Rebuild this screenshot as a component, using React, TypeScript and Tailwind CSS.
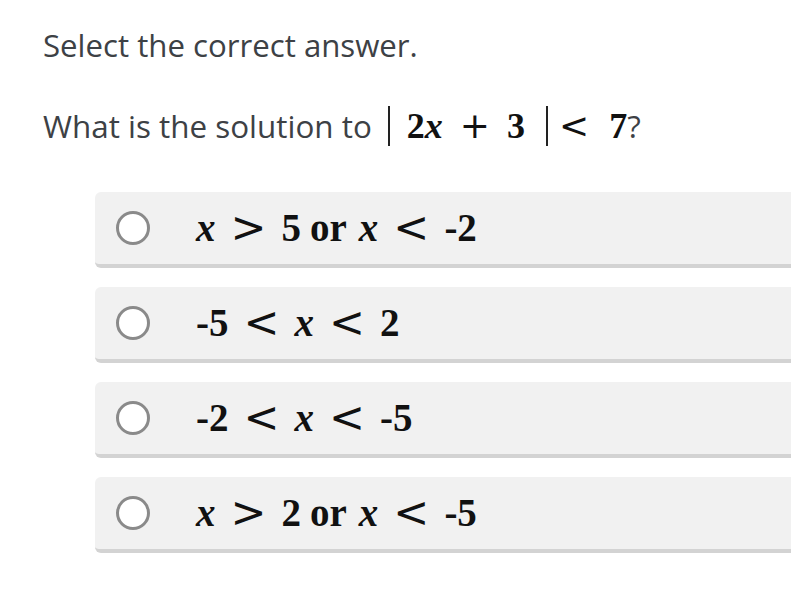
import React from "react";

const mathFont = { fontFamily: '"Liberation Serif", "Times New Roman", serif' };
const opFont = { fontFamily: '"DejaVu Sans", sans-serif' };

function Rel({ children, className = "mx-[10px]" }: { children: React.ReactNode; className?: string }) {
  return (
    <span className={`${className} font-normal`} style={opFont}>
      {children}
    </span>
  );
}

function X() {
  return <span className="italic font-bold">x</span>;
}

function Num({ children }: { children: React.ReactNode }) {
  return <span className="font-bold">{children}</span>;
}

function Or() {
  return <span className="ml-[9px] mr-[12px] font-bold">or</span>;
}

const rel = "relative top-[1px] mx-[15px] text-[43px]";

const OPTIONS: React.ReactNode[] = [
  <>
    <X />
    <Rel className={rel}>&gt;</Rel>
    <Num>5</Num>
    <Or />
    <X />
    <Rel className={rel}>&lt;</Rel>
    <Num>-2</Num>
  </>,
  <>
    <Num>-5</Num>
    <Rel className={rel}>&lt;</Rel>
    <X />
    <Rel className={rel}>&lt;</Rel>
    <Num>2</Num>
  </>,
  <>
    <Num>-2</Num>
    <Rel className={rel}>&lt;</Rel>
    <X />
    <Rel className={rel}>&lt;</Rel>
    <Num>-5</Num>
  </>,
  <>
    <X />
    <Rel className={rel}>&gt;</Rel>
    <Num>2</Num>
    <Or />
    <X />
    <Rel className={rel}>&lt;</Rel>
    <Num>-5</Num>
  </>,
];

export default function App() {
  return (
    <div
      className="min-h-screen w-[791px] overflow-hidden bg-white text-[#3d4145]"
      style={{ fontFamily: '"Open Sans", "Noto Sans", sans-serif' }}
    >
      <div className="pl-[43px] pt-[22px]">
        <h1 className="text-[31.2px] leading-[46px]">Select the correct answer.</h1>

        <div className="mt-[35px] flex items-center text-[31.4px] leading-[46px]">
          <span>What is the solution to</span>
          <span className="ml-[16px] flex items-center text-[#111] text-[36px]" style={mathFont}>
            <span className="h-[40px] w-[2px] bg-[#222]" />
            <span className="ml-[17px] font-bold">2</span>
            <X />
            <Rel className="mx-[17px]">+</Rel>
            <Num>3</Num>
            <span className="ml-[21px] h-[40px] w-[2px] bg-[#222]" />
            <Rel className="ml-[11px] mr-[20px]">&lt;</Rel>
            <Num>7</Num>
          </span>
          <span>?</span>
        </div>
      </div>

      <div className="ml-[95px] mt-[43px] flex w-[760px] flex-col gap-[19px]">
        {OPTIONS.map((opt, i) => (
          <div
            key={i}
            className="flex h-[76px] items-center rounded-[6px] border-b-[4px] border-[#d3d3d3] bg-[#f1f1f1]"
          >
            <span className="ml-[21px] h-[34px] w-[34px] rounded-full border-[3px] border-[#8a8a8a] bg-white" />
            <span className="relative -top-[2px] ml-[46px] text-[39px] leading-none text-[#111]" style={mathFont}>
              {opt}
            </span>
          </div>
        ))}
      </div>
    </div>
  );
}
